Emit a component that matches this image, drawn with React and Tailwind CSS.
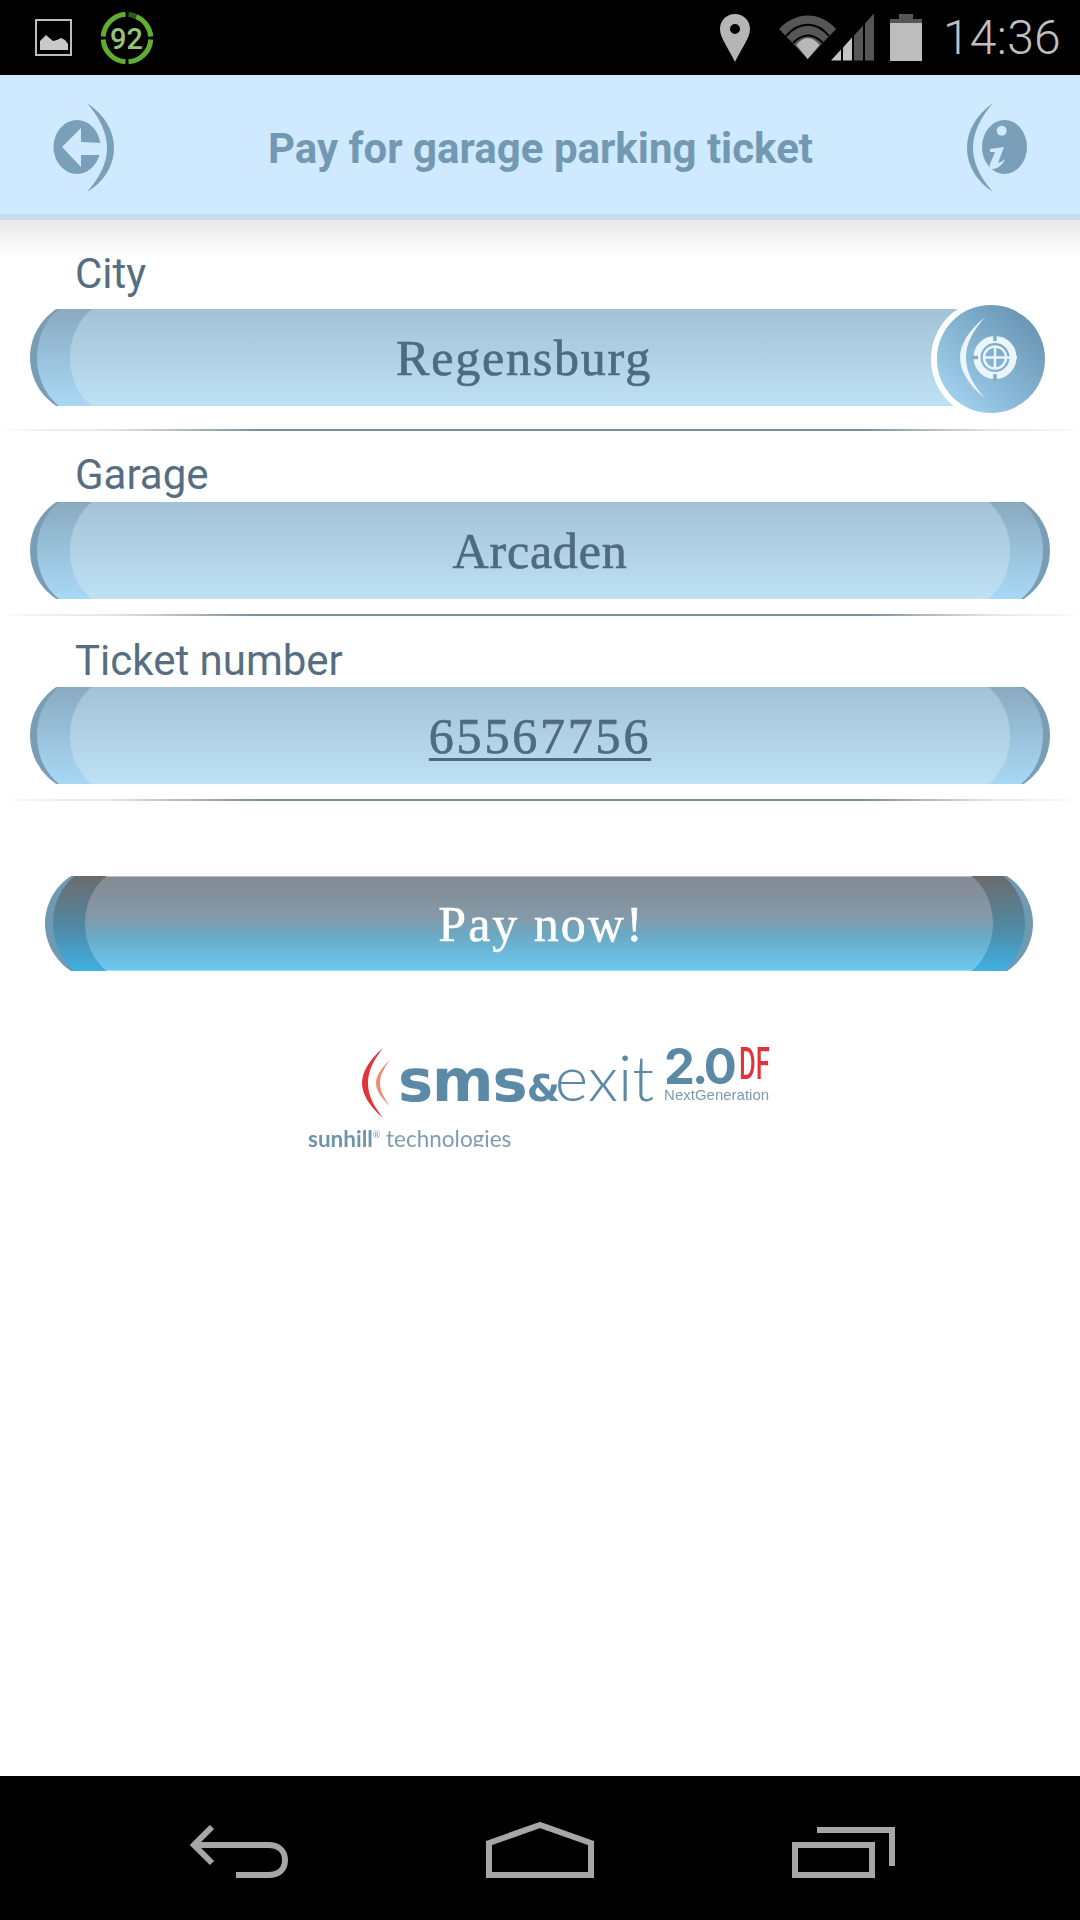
const serif = "font-['Liberation_Serif',serif]";

function Divider() {
  return <div className="h-[2px] w-full bg-[linear-gradient(90deg,#ffffff_0%,#f0f2f4_3%,#e4e8eb_10%,#7b8e9a_24%,#7b8e9a_80%,#e4e8eb_92%,#f4f5f6_98%,#ffffff_100%)]" />;
}

function Pill({ children, cutRight = false, text = "tracking-[1.8px]" }) {
  return (
    <div className={`relative h-[97px] overflow-hidden ${cutRight ? "w-[988px]" : "w-full"}`}>
      <div className="absolute -inset-y-[10px] inset-x-0 rounded-[60px/59px] bg-[#7a9db6]" />
      <div className="absolute -inset-y-[10px] inset-x-[7px] rounded-[50px/59px] bg-[linear-gradient(180deg,#8aaac0_0%,#8aaac0_9%,#a8d8f5_91%,#a8d8f5_100%)]" />
      <div className="absolute -inset-y-[10px] inset-x-[40px] rounded-[50px/59px] bg-[linear-gradient(180deg,#a3c2d6_0%,#a3c2d6_9%,#bee1f3_91%,#bee1f3_100%)]" />
      <div className={`relative flex h-full items-center justify-center text-[50px] leading-[60px] text-[#4f6b80] [-webkit-text-stroke:0.7px_#4f6b80] ${serif} ${text}`}>
        {children}
      </div>
    </div>
  );
}

function Label({ children }) {
  return <div className="pl-[75px] text-[42px] leading-[48px] text-[#566e82] font-['Roboto',sans-serif]">{children}</div>;
}

function StatusBar() {
  return (
    <div className="flex h-[75px] items-center justify-between bg-black pl-[35px] pr-[19px]">
      <div className="flex items-center gap-[27px]">
        <svg width="38" height="38" viewBox="0 0 38 38">
          <rect x="1" y="1" width="35" height="35" fill="none" stroke="#bdbdbd" strokeWidth="2" />
          <path d="M5 31V22l6-6 7 6 4-1 4-2 4 2 3 4v6z" fill="#c9c9c9" />
        </svg>
        <svg width="54" height="54" viewBox="0 0 54 54">
          <g fill="none" stroke="#5fae2e" strokeWidth="5">
            <path d="M36 5.500A24 24 0 0 1 50.800 25.500" />
            <path d="M50.800 28.500A24 24 0 0 1 28.500 50.800" />
            <path d="M25.500 50.800A24 24 0 0 1 3.200 28.500" />
            <path d="M3.200 25.500A24 24 0 0 1 25.500 3.200" />
          </g>
          <path d="M28.500 3.200A24 24 0 0 1 36 5.500" fill="none" stroke="#2f5c18" strokeWidth="5" />
          <text x="26.500" y="37.500" textAnchor="middle" fontFamily="Roboto, sans-serif" fontWeight="500" fontSize="29" fill="#96c27a">92</text>
        </svg>
      </div>
      <div className="flex items-center">
        <svg width="32" height="50" viewBox="0 0 32 50" className="mr-[28px]">
          <path fillRule="evenodd" d="M16 1C7 1 1 8 1 16c0 9 9 20 15 33 6-13 15-24 15-33C31 8 25 1 16 1zm0 10a5 5 0 1 1 0 10 5 5 0 0 1 0-10z" fill="#b5b5b5" />
        </svg>
        <svg width="95" height="50" viewBox="0 0 95 50" className="mr-[16px]">
          <path d="M28.700 46 0 16C17-2 41-2 57 16z" fill="#565656" />
          <path d="M28.700 46 17.300 32c7-9.500 16-9.500 23.300 0z" fill="#b8b8b8" />
          <path d="M7 23C20 8 38 8 50 23M14 30C24 20 34 20 44 30" fill="none" stroke="#000000" strokeWidth="2" />
          <path d="M52 47.500 62 36.600V47.500z" fill="#c4c4c4" />
          <path d="M64 34.400 73 24.600V47.500H64z" fill="#c4c4c4" />
          <path d="M75 22.400 84 12.600V47.500H75z" fill="#565656" />
          <path d="M86 10.400 95 .6V47.500H86z" fill="#565656" />
        </svg>
        <svg width="32" height="48" viewBox="0 0 32 48" className="mr-[21px]">
          <path d="M9 0h14v5h9v8H0V5h9z" fill="#565656" />
          <rect x="0" y="9" width="32" height="38" fill="#bdbdbd" />
        </svg>
        <span className="text-[48px] font-light leading-[50px] tracking-[0.3px] text-[#c0c0c0] font-['Roboto',sans-serif]">14:36</span>
      </div>
    </div>
  );
}

function Header() {
  return (
    <div className="flex h-[145px] items-center justify-between border-b-[6px] border-[#c9dce9] bg-[#cfeafe] pl-[53px] pr-[52px]">
      <svg width="62" height="90" viewBox="0 0 62 90" className="mt-[6px]">
        <path d="M34 0C52 12 61 28 61 45S52 78 34 89C47 74 54 60 54 45S47 15 34 0z" fill="#7a9fb8" />
        <ellipse cx="24" cy="44" rx="23.500" ry="27" fill="#7a9fb8" />
        <path d="M9 44 28 25V39L48 40V52L28 52V64z" fill="#cfeafe" />
      </svg>
      <div className="mt-[9px] text-[42px] font-bold leading-[48px] text-[#7398b2] font-['Roboto',sans-serif]">Pay for garage parking ticket</div>
      <svg width="62" height="90" viewBox="0 0 62 90" className="mt-[6px]">
        <path d="M27 0C10 12 1 28 1 45S10 78 27 89C14 74 7 60 7 45S14 15 27 0z" fill="#7a9fb8" />
        <ellipse cx="38.500" cy="44" rx="22.500" ry="27" fill="#7a9fb8" />
        <circle cx="35.700" cy="27.700" r="5" fill="#cfeafe" />
        <path d="M24 46 38 44 32 60C35 59 37 58 39 56 37 62 31 66 27 66 24 66 23 64 24 61L29 49 24 49z" fill="#cfeafe" />
      </svg>
    </div>
  );
}

function Logo() {
  return (
    <div className="mt-[71px] blur-[0.6px]">
      <div className="flex items-start pl-[361px]">
        <svg width="32" height="72" viewBox="0 0 32 72" className="mt-[5px]">
          <path d="M22 1C7 14 1 26 1 36s6 22 21 35C12 58 7 48 7 36S12 14 22 1z" fill="#e0343a" />
          <path d="M29 13C20 21 15 29 15 36s5 15 14 23C23 51 19 44 19 36s4-15 10-23z" fill="#ec8d74" />
        </svg>
        <div className="ml-[5px] flex items-baseline leading-[70px] text-[#5b89a6]">
          <span className="text-[59px] font-bold tracking-[-1px] font-['DejaVu_Sans',sans-serif]">sms</span>
          <span className="text-[38px] font-bold font-['DejaVu_Sans',sans-serif]">&amp;</span>
          <span className="-ml-[5px] text-[64px] font-light font-['Lato',sans-serif]">exit</span>
        </div>
        <div className="ml-[10px] flex flex-col">
          <div className="flex items-start">
            <span className="text-[49px] font-bold leading-[50px] tracking-[-3px] text-[#5b89a6] font-['Inter',sans-serif]">2.0</span>
            <span className="ml-[5px] origin-left scale-x-[0.58] text-[44px] font-medium leading-[44px] text-[#e0343a] font-['Roboto',sans-serif]">DF</span>
          </div>
          <div className="-mt-[5px] text-[15px] leading-[16px] text-[#7d9aae] font-['Liberation_Sans',sans-serif]">NextGeneration</div>
        </div>
      </div>
      <div className="-mt-[1px] h-[25px] overflow-hidden pl-[308px] text-[22.5px] leading-[26px] text-[#7d9cb0] font-['Lato',sans-serif]">
        <span className="font-bold text-[#6f93aa]">sunhill</span>
        <span className="align-super text-[9px]">®</span> technologies
      </div>
    </div>
  );
}

function NavBar() {
  return (
    <div className="flex h-[144px] items-end justify-between bg-black pb-[42px] pl-[190px] pr-[185px]">
      <svg width="98" height="53" viewBox="0 0 98 53">
        <path d="M22 2 4 20 22 38M4 20H78C90 20 95 27 95 35 95 44 90 50 78 50H46" fill="none" stroke="#a6a6a6" strokeWidth="6" />
      </svg>
      <svg width="108" height="56" viewBox="0 0 108 56">
        <path d="M3 53V21L54 3l51 18v32z" fill="none" stroke="#a6a6a6" strokeWidth="6" />
      </svg>
      <svg width="103" height="51" viewBox="0 0 103 51">
        <path d="M25 3H100V39" fill="none" stroke="#a6a6a6" strokeWidth="6" />
        <rect x="3" y="18" width="77" height="30" fill="none" stroke="#a6a6a6" strokeWidth="6" />
      </svg>
    </div>
  );
}

export default function App() {
  return (
    <div className="flex h-[1920px] w-[1080px] flex-col overflow-hidden bg-white">
      <StatusBar />
      <Header />
      <div className="flex-1 bg-[linear-gradient(180deg,#e8e8e8_0px,#ffffff_36px)] pt-[30px]">
        <Label>City</Label>
        <div className="relative mx-[30px] mt-[11px]">
          <Pill cutRight>Regensburg</Pill>
          <div className="absolute -top-[4px] right-[5px] flex h-[108px] w-[108px] items-center justify-center rounded-full bg-[linear-gradient(45deg,#a9daf6,#5f8bab)] shadow-[0_0_0_6px_#ffffff]">
            <svg width="57" height="81" viewBox="0 0 57 81" className="mb-[3px] mr-[6px]">
              <path d="M25 0C8 14 0 28 0 40.500S8 68 25 81C13 68 6 55 6 40.500S13 14 25 0z" fill="#eaf5fc" />
              <circle cx="35" cy="40.500" r="18" fill="none" stroke="#eaf5fc" strokeWidth="7" />
              <path d="M35 17V24M35 57V64M11 40.500H18" stroke="#80aecd" strokeWidth="3.500" />
              <circle cx="35" cy="40.500" r="11" fill="none" stroke="#eaf5fc" strokeWidth="2.500" />
              <path d="M35 29V52M24 40.500H57" stroke="#eaf5fc" strokeWidth="2.500" />
            </svg>
          </div>
        </div>
        <div className="mt-[23px]"><Divider /></div>
        <div className="mt-[20px]"><Label>Garage</Label></div>
        <div className="mx-[30px] mt-[3px]"><Pill text="tracking-[0.8px]">Arcaden</Pill></div>
        <div className="mt-[15px]"><Divider /></div>
        <div className="mt-[21px]"><Label>Ticket number</Label></div>
        <div className="mx-[30px] mt-[2px]">
          <Pill text="tracking-[2.8px] underline underline-offset-[5px] decoration-[3px]">65567756</Pill>
        </div>
        <div className="mt-[15px]"><Divider /></div>
        <div className="ml-[45px] mr-[47px] mt-[75px]">
          <div className="relative h-[95px] overflow-hidden">
            <div className="absolute -inset-y-[10px] inset-x-0 rounded-[60px/58px] bg-[#7099b2]" />
            <div className="absolute -inset-y-[10px] inset-x-[8px] rounded-[50px/58px] bg-[linear-gradient(180deg,#6b6b6e_0%,#6b6b6e_9%,#4f8ba5_55%,#3eb0e4_91%,#3eb0e4_100%)]" />
            <div className="absolute -inset-y-[10px] inset-x-[40px] rounded-[50px/58px] bg-[linear-gradient(180deg,#b9bcc0_0%,#b9bcc0_9.300%,#858a93_9.300%,#8499a8_45%,#6aa9c4_60%,#6cc8f0_90%,#a4dcf5_90.500%,#a4dcf5_100%)]" />
            <div className={`relative flex h-full items-center justify-center pl-[5px] text-[50px] leading-[60px] tracking-[2px] text-white [-webkit-text-stroke:0.5px_#ffffff] ${serif}`}>Pay now!</div>
          </div>
        </div>
        <Logo />
      </div>
      <NavBar />
    </div>
  );
}
